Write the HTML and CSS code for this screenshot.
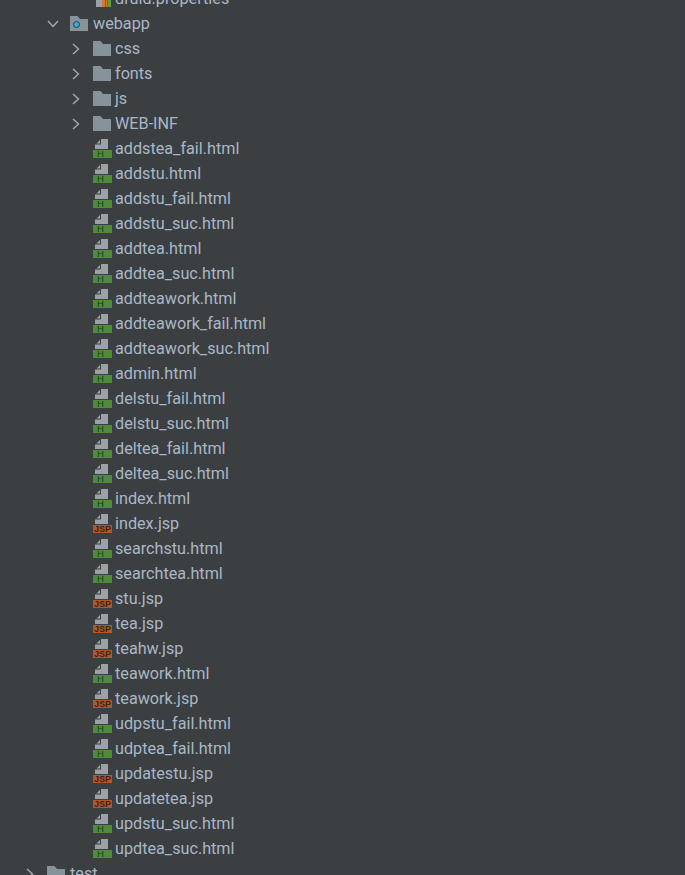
FILE: index.html
```html
<!DOCTYPE html>
<html lang="en">
<head>
    <meta charset="UTF-8">
    <title>Project tree</title>
    <link rel="stylesheet" href="styles.css">
</head>
<body>
    <svg class="defs" width="0" height="0">
        <symbol id="folder" viewBox="0 0 18 15">
            <path d="M0 0h7.500l2.500 3h8v12H0z" fill="#87939a"/>
        </symbol>
        <symbol id="doc" viewBox="0 0 13 10">
            <path d="M6 0h7v10H0V5.500h6z" fill="#9aa2a7"/>
            <path d="M1.500 4.500L5 1v3.500z" fill="#9aa2a7"/>
        </symbol>
        <symbol id="chev-right" viewBox="0 0 10 12">
            <path d="M2 1l5.500 5L2 11" fill="none" stroke="#a7abae" stroke-width="1.400"/>
        </symbol>
        <symbol id="chev-down" viewBox="0 0 12 10">
            <path d="M1 2l5 5.500L11 2" fill="none" stroke="#a7abae" stroke-width="1.400"/>
        </symbol>
    </svg>

    <div class="tree">
        <div class="row depth-3">
            <span class="arrow"></span>
            <svg class="props-icon" width="18" height="16" viewBox="0 0 18 16">
                <path d="M3 0h6v16H3z" fill="#9aa2a7"/>
                <path d="M9 9h3v7H9z" fill="#d9772b"/>
                <path d="M12.500 5h2v11h-2z" fill="#d9772b"/>
                <path d="M15 1h3v15h-3z" fill="#5f9e3f"/>
            </svg>
            <span class="name">druid.properties</span>
        </div>
        <div class="row depth-2">
            <span class="arrow"><svg width="12" height="10"><use href="#chev-down"/></svg></span>
            <svg class="folder" width="18" height="15" viewBox="0 0 18 15">
                <use href="#folder"/>
                <circle cx="6.500" cy="8.500" r="3" fill="#3fa9dc" stroke="#2f3b42"/>
            </svg>
            <span class="name">webapp</span>
        </div>
        <div class="row depth-3">
            <span class="arrow"><svg width="10" height="12"><use href="#chev-right"/></svg></span>
            <svg class="folder" width="18" height="15"><use href="#folder"/></svg>
            <span class="name">css</span>
        </div>
        <div class="row depth-3">
            <span class="arrow"><svg width="10" height="12"><use href="#chev-right"/></svg></span>
            <svg class="folder" width="18" height="15"><use href="#folder"/></svg>
            <span class="name">fonts</span>
        </div>
        <div class="row depth-3">
            <span class="arrow"><svg width="10" height="12"><use href="#chev-right"/></svg></span>
            <svg class="folder" width="18" height="15"><use href="#folder"/></svg>
            <span class="name">js</span>
        </div>
        <div class="row depth-3">
            <span class="arrow"><svg width="10" height="12"><use href="#chev-right"/></svg></span>
            <svg class="folder" width="18" height="15"><use href="#folder"/></svg>
            <span class="name">WEB-INF</span>
        </div>

        <div class="row depth-3"><span class="arrow"></span><span class="file-icon"><svg width="13" height="10"><use href="#doc"/></svg><span class="badge html">H</span></span><span class="name">addstea_fail.html</span></div>
        <div class="row depth-3"><span class="arrow"></span><span class="file-icon"><svg width="13" height="10"><use href="#doc"/></svg><span class="badge html">H</span></span><span class="name">addstu.html</span></div>
        <div class="row depth-3"><span class="arrow"></span><span class="file-icon"><svg width="13" height="10"><use href="#doc"/></svg><span class="badge html">H</span></span><span class="name">addstu_fail.html</span></div>
        <div class="row depth-3"><span class="arrow"></span><span class="file-icon"><svg width="13" height="10"><use href="#doc"/></svg><span class="badge html">H</span></span><span class="name">addstu_suc.html</span></div>
        <div class="row depth-3"><span class="arrow"></span><span class="file-icon"><svg width="13" height="10"><use href="#doc"/></svg><span class="badge html">H</span></span><span class="name">addtea.html</span></div>
        <div class="row depth-3"><span class="arrow"></span><span class="file-icon"><svg width="13" height="10"><use href="#doc"/></svg><span class="badge html">H</span></span><span class="name">addtea_suc.html</span></div>
        <div class="row depth-3"><span class="arrow"></span><span class="file-icon"><svg width="13" height="10"><use href="#doc"/></svg><span class="badge html">H</span></span><span class="name">addteawork.html</span></div>
        <div class="row depth-3"><span class="arrow"></span><span class="file-icon"><svg width="13" height="10"><use href="#doc"/></svg><span class="badge html">H</span></span><span class="name">addteawork_fail.html</span></div>
        <div class="row depth-3"><span class="arrow"></span><span class="file-icon"><svg width="13" height="10"><use href="#doc"/></svg><span class="badge html">H</span></span><span class="name">addteawork_suc.html</span></div>
        <div class="row depth-3"><span class="arrow"></span><span class="file-icon"><svg width="13" height="10"><use href="#doc"/></svg><span class="badge html">H</span></span><span class="name">admin.html</span></div>
        <div class="row depth-3"><span class="arrow"></span><span class="file-icon"><svg width="13" height="10"><use href="#doc"/></svg><span class="badge html">H</span></span><span class="name">delstu_fail.html</span></div>
        <div class="row depth-3"><span class="arrow"></span><span class="file-icon"><svg width="13" height="10"><use href="#doc"/></svg><span class="badge html">H</span></span><span class="name">delstu_suc.html</span></div>
        <div class="row depth-3"><span class="arrow"></span><span class="file-icon"><svg width="13" height="10"><use href="#doc"/></svg><span class="badge html">H</span></span><span class="name">deltea_fail.html</span></div>
        <div class="row depth-3"><span class="arrow"></span><span class="file-icon"><svg width="13" height="10"><use href="#doc"/></svg><span class="badge html">H</span></span><span class="name">deltea_suc.html</span></div>
        <div class="row depth-3"><span class="arrow"></span><span class="file-icon"><svg width="13" height="10"><use href="#doc"/></svg><span class="badge html">H</span></span><span class="name">index.html</span></div>
        <div class="row depth-3"><span class="arrow"></span><span class="file-icon"><svg width="13" height="10"><use href="#doc"/></svg><span class="badge jsp">JSP</span></span><span class="name">index.jsp</span></div>
        <div class="row depth-3"><span class="arrow"></span><span class="file-icon"><svg width="13" height="10"><use href="#doc"/></svg><span class="badge html">H</span></span><span class="name">searchstu.html</span></div>
        <div class="row depth-3"><span class="arrow"></span><span class="file-icon"><svg width="13" height="10"><use href="#doc"/></svg><span class="badge html">H</span></span><span class="name">searchtea.html</span></div>
        <div class="row depth-3"><span class="arrow"></span><span class="file-icon"><svg width="13" height="10"><use href="#doc"/></svg><span class="badge jsp">JSP</span></span><span class="name">stu.jsp</span></div>
        <div class="row depth-3"><span class="arrow"></span><span class="file-icon"><svg width="13" height="10"><use href="#doc"/></svg><span class="badge jsp">JSP</span></span><span class="name">tea.jsp</span></div>
        <div class="row depth-3"><span class="arrow"></span><span class="file-icon"><svg width="13" height="10"><use href="#doc"/></svg><span class="badge jsp">JSP</span></span><span class="name">teahw.jsp</span></div>
        <div class="row depth-3"><span class="arrow"></span><span class="file-icon"><svg width="13" height="10"><use href="#doc"/></svg><span class="badge html">H</span></span><span class="name">teawork.html</span></div>
        <div class="row depth-3"><span class="arrow"></span><span class="file-icon"><svg width="13" height="10"><use href="#doc"/></svg><span class="badge jsp">JSP</span></span><span class="name">teawork.jsp</span></div>
        <div class="row depth-3"><span class="arrow"></span><span class="file-icon"><svg width="13" height="10"><use href="#doc"/></svg><span class="badge html">H</span></span><span class="name">udpstu_fail.html</span></div>
        <div class="row depth-3"><span class="arrow"></span><span class="file-icon"><svg width="13" height="10"><use href="#doc"/></svg><span class="badge html">H</span></span><span class="name">udptea_fail.html</span></div>
        <div class="row depth-3"><span class="arrow"></span><span class="file-icon"><svg width="13" height="10"><use href="#doc"/></svg><span class="badge jsp">JSP</span></span><span class="name">updatestu.jsp</span></div>
        <div class="row depth-3"><span class="arrow"></span><span class="file-icon"><svg width="13" height="10"><use href="#doc"/></svg><span class="badge jsp">JSP</span></span><span class="name">updatetea.jsp</span></div>
        <div class="row depth-3"><span class="arrow"></span><span class="file-icon"><svg width="13" height="10"><use href="#doc"/></svg><span class="badge html">H</span></span><span class="name">updstu_suc.html</span></div>
        <div class="row depth-3"><span class="arrow"></span><span class="file-icon"><svg width="13" height="10"><use href="#doc"/></svg><span class="badge html">H</span></span><span class="name">updtea_suc.html</span></div>

        <div class="row depth-1">
            <span class="arrow"><svg width="10" height="12"><use href="#chev-right"/></svg></span>
            <svg class="folder" width="18" height="15"><use href="#folder"/></svg>
            <span class="name">test</span>
        </div>
    </div>
</body>
</html>
```

FILE: styles.css
```css
* {
    margin: 0;
    padding: 0;
    box-sizing: border-box;
}

html, body {
    height: 100%;
    overflow: hidden;
}

body {
    background-color: #3c3f41;
    color: #a9b7c6;
    font-family: Roboto, "Noto Sans", sans-serif;
    font-size: 16.2px;
}

.defs {
    display: block;
    height: 0;
}

.tree {
    display: flex;
    flex-direction: column;
    margin-top: -14px;
}

.row {
    display: flex;
    align-items: center;
    height: 25px;
    flex-shrink: 0;
}

.depth-1 { padding-left: 24px; }
.depth-2 { padding-left: 47px; }
.depth-3 { padding-left: 70px; }

.arrow {
    display: flex;
    align-items: center;
    width: 23px;
    height: 25px;
}

.depth-1 .arrow,
.depth-3 .arrow {
    padding-left: 1px;
}

.folder,
.props-icon {
    margin-right: 4px;
    flex-shrink: 0;
}

.depth-1 .folder,
.depth-2 .folder {
    margin-right: 5px;
}

.file-icon {
    display: flex;
    flex-direction: column;
    align-items: flex-end;
    width: 19px;
    margin-right: 3px;
    flex-shrink: 0;
}

.file-icon svg {
    display: block;
    margin-right: 4px;
}

.badge {
    display: block;
    width: 19px;
    height: 8px;
    margin-top: 1px;
    font-family: "Liberation Sans", sans-serif;
    line-height: 8px;
}

.html {
    background-color: #4e8c3c;
    color: #22381e;
    padding-left: 4px;
    font-size: 9.5px;
}

.jsp {
    background-color: #b5562a;
    color: #3c2419;
    text-align: center;
    font-size: 9px;
    font-weight: bold;
}

.name {
    white-space: nowrap;
}
```
